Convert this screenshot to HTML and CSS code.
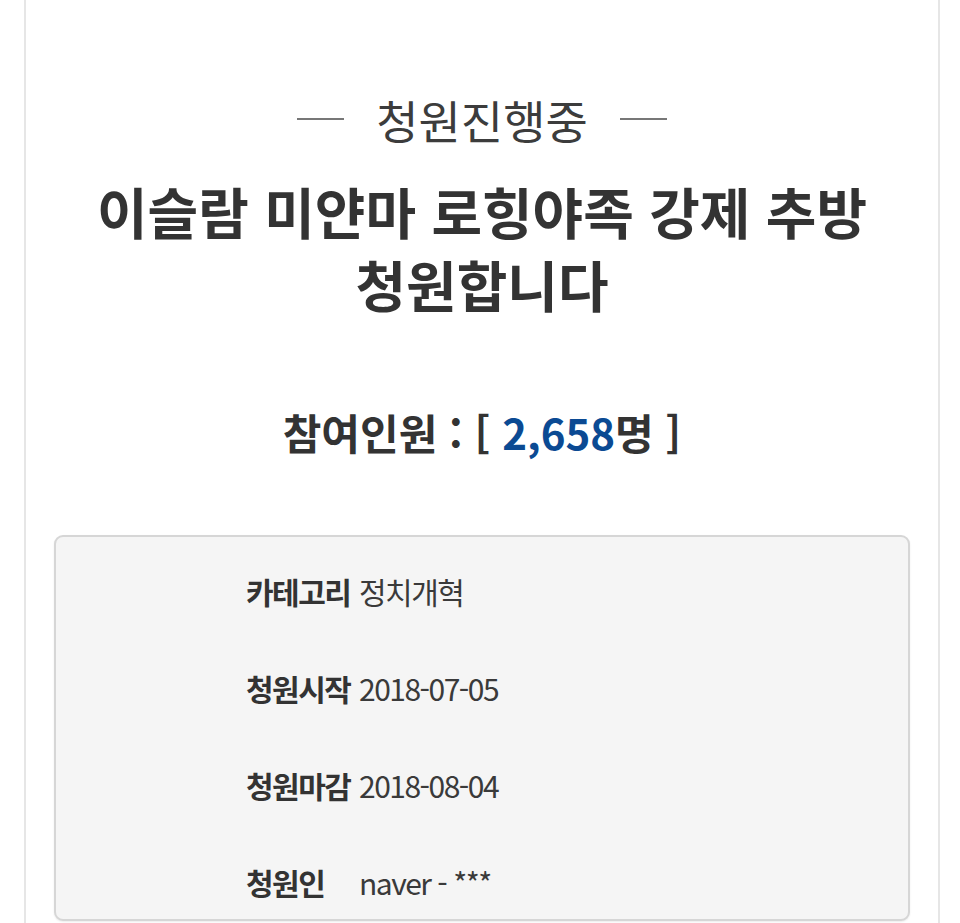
FILE: index.html
```html
<!DOCTYPE html>
<html lang="ko">
<head>
  <meta charset="UTF-8" />
  <meta name="viewport" content="width=device-width, initial-scale=1.0"/>
  <title>청원진행중</title>
  <link rel="stylesheet" href="styles.css">
</head>
<body>

  <div class="container">
    <div class="status">
      <span class="dash"></span>
      <span class="status-text">청원진행중</span>
      <span class="dash"></span>
    </div>

    <h1>이슬람 미얀마 로힝야족 강제 추방<br>청원합니다</h1>

    <h2 class="count">참여인원 : [ <span class="num">2,658</span>명 ]</h2>

    <div class="info">
      <ul>
        <li><strong>카테고리</strong><span>정치개혁</span></li>
        <li><strong>청원시작</strong><span>2018-07-05</span></li>
        <li><strong>청원마감</strong><span>2018-08-04</span></li>
        <li><strong>청원인</strong><span>naver - ***</span></li>
      </ul>
    </div>
  </div>

</body>
</html>
```

FILE: styles.css
```css
* {
  margin: 0;
  padding: 0;
  box-sizing: border-box;
}

body {
  font-family: 'Noto Sans CJK KR', 'Noto Sans', sans-serif;
  background: #fff;
  color: #333;
  overflow: hidden;
}

.container {
  margin: 0 20px 0 24px;
  border-left: 2px solid #e6e6e6;
  border-right: 2px solid #e6e6e6;
  min-height: 923px;
  padding: 87px 28px 0;
}

.status {
  display: flex;
  justify-content: center;
  align-items: center;
  gap: 32px;
}

.dash {
  width: 47px;
  height: 2px;
  background: #777;
}

.status-text {
  font-size: 46px;
  line-height: 64px;
  color: #3c3c3c;
}

h1 {
  text-align: center;
  font-size: 55px;
  line-height: 73px;
  font-weight: bold;
  color: #333;
  margin-top: 23px;
}

.count {
  text-align: center;
  font-size: 42px;
  line-height: 60px;
  font-weight: bold;
  color: #333;
  margin-top: 82px;
}

.num {
  color: #0b4a93;
}

.info {
  margin-top: 73px;
  background: #f5f5f5;
  border: 2px solid #d6d6d6;
  border-radius: 9px;
  box-shadow: 0 1px 2px rgba(0,0,0,0.08);
  height: 386px;
  padding: 34px 0 0 190px;
}

.info ul {
  list-style: none;
}

.info li {
  display: flex;
  align-items: baseline;
  font-size: 30px;
  line-height: 40px;
  margin-bottom: 57px;
  letter-spacing: -1.5px;
}

.info strong {
  width: 113px;
  flex-shrink: 0;
  color: #333;
}

.info span {
  color: #3a3a3a;
}
```
